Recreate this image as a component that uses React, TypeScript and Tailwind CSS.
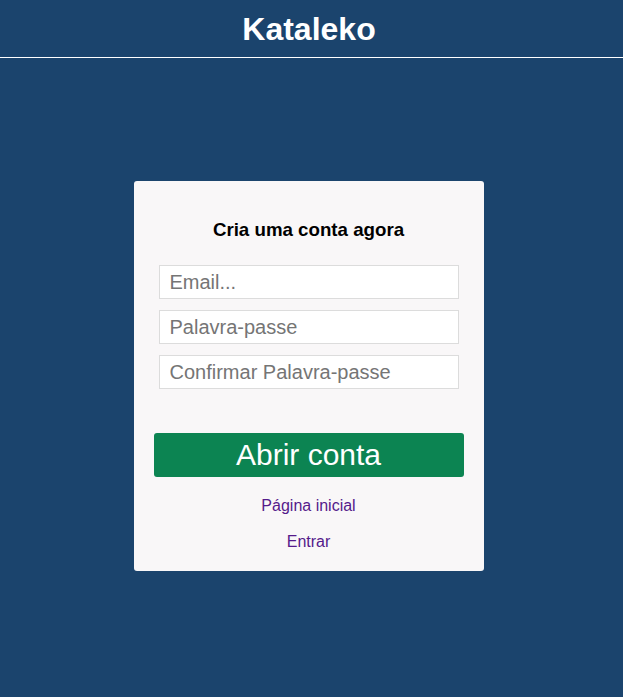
export default function App() {
  return (
    <div className="min-h-[697px] bg-[#1b446d] font-['Liberation_Sans',Arial,sans-serif]">
      <header className="flex h-[58px] items-center justify-center border-b border-white pr-[5px]">
        <h1 className="text-[32px] font-bold leading-none text-white">Kataleko</h1>
      </header>

      <div className="flex justify-center pr-[6px] pt-[123px]">
        <form className="flex w-[350px] flex-col items-center rounded-[3px] bg-[#f9f7f8] pb-[19px] pt-[38px]">
          <h2 className="text-[18.72px] font-bold leading-[22px] text-black">Cria uma conta agora</h2>

          <div className="mt-[24px] flex w-[300px] flex-col gap-[11px]">
            <input
              type="email"
              placeholder="Email..."
              className="h-[34px] w-full border border-[#dcdcdc] bg-white px-[10px] text-[20px] text-black outline-none placeholder:text-[#757575]"
            />
            <input
              type="password"
              placeholder="Palavra-passe"
              className="h-[34px] w-full border border-[#dcdcdc] bg-white px-[10px] text-[20px] text-black outline-none placeholder:text-[#757575]"
            />
            <input
              type="password"
              placeholder="Confirmar Palavra-passe"
              className="h-[34px] w-full border border-[#dcdcdc] bg-white px-[10px] text-[20px] text-black outline-none placeholder:text-[#757575]"
            />
          </div>

          <button
            type="button"
            className="mt-[44px] flex h-[44px] w-[310px] items-center justify-center rounded-[3px] bg-[#0c8452] text-[30px] leading-none text-white"
          >
            Abrir conta
          </button>

          <a href="#" className="mt-[19px] text-[16px] leading-[20px] text-[#551a8b]">
            Página inicial
          </a>
          <a href="#" className="mt-[16px] text-[16px] leading-[20px] text-[#551a8b]">
            Entrar
          </a>
        </form>
      </div>
    </div>
  )
}
